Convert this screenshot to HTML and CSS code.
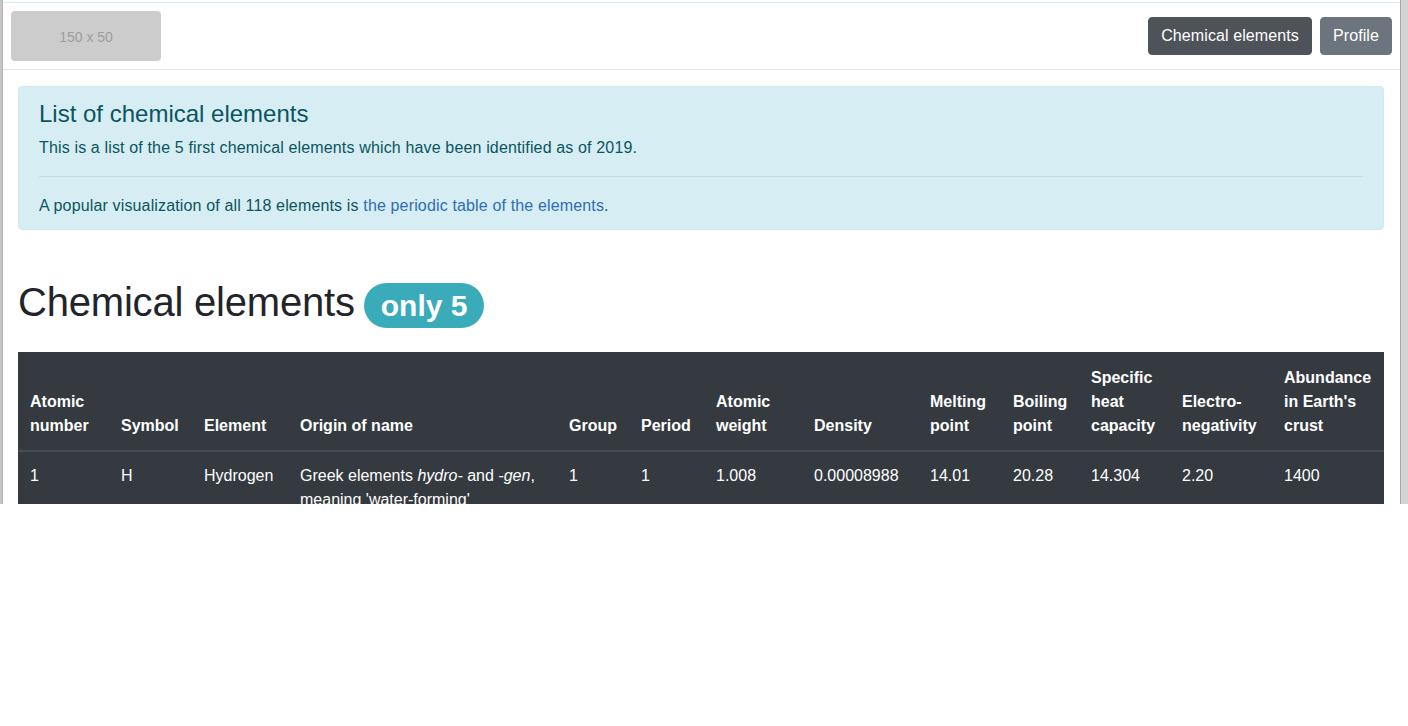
FILE: index.html
```html
<!DOCTYPE html>
<html>
<head>
<meta charset="utf-8">
<link rel="stylesheet" href="styles.css">
</head>
<body>
<div class="frame">
  <div class="edge-left"></div>
  <div class="viewport">
    <nav class="navbar">
      <div class="logo">150 x 50</div>
      <div class="nav-buttons">
        <button class="btn btn-active">Chemical elements</button>
        <button class="btn btn-secondary">Profile</button>
      </div>
    </nav>
    <main class="container">
      <div class="alert">
        <h4 class="alert-heading">List of chemical elements</h4>
        <p>This is a list of the 5 first chemical elements which have been identified as of 2019.</p>
        <hr>
        <p class="mb-0">A popular visualization of all 118 elements is <a href="#">the periodic table of the elements</a>.</p>
      </div>
      <h1 class="title">Chemical elements<span class="badge">only 5</span></h1>
      <table class="table">
        <colgroup>
          <col class="c1"><col class="c2"><col class="c3"><col class="c4"><col class="c5"><col class="c6"><col class="c7"><col class="c8"><col class="c9"><col class="c10"><col class="c11"><col class="c12"><col class="c13">
        </colgroup>
        <thead>
          <tr>
            <th>Atomic number</th>
            <th>Symbol</th>
            <th>Element</th>
            <th>Origin of name</th>
            <th>Group</th>
            <th>Period</th>
            <th>Atomic weight</th>
            <th>Density</th>
            <th>Melting point</th>
            <th>Boiling point</th>
            <th>Specific heat capacity</th>
            <th>Electro-negativity</th>
            <th>Abundance in Earth's crust</th>
          </tr>
        </thead>
        <tbody>
          <tr>
            <td>1</td>
            <td>H</td>
            <td>Hydrogen</td>
            <td>Greek elements <em>hydro-</em> and <em>-gen</em>, meaning 'water-forming'</td>
            <td>1</td>
            <td>1</td>
            <td>1.008</td>
            <td>0.00008988</td>
            <td>14.01</td>
            <td>20.28</td>
            <td>14.304</td>
            <td>2.20</td>
            <td>1400</td>
          </tr>
          <tr>
            <td>2</td>
            <td>He</td>
            <td>Helium</td>
            <td>Greek <em>hḗlios</em>, 'sun'</td>
            <td>18</td>
            <td>1</td>
            <td>4.0026</td>
            <td>0.0001785</td>
            <td>0.956</td>
            <td>4.22</td>
            <td>5.193</td>
            <td>–</td>
            <td>0.008</td>
          </tr>
        </tbody>
      </table>
    </main>
  </div>
  <div class="scrollbar"></div>
</div>
</body>
</html>
```

FILE: styles.css
```css
* { box-sizing: border-box; }

html, body {
  margin: 0;
  padding: 0;
  background: #fff;
}

body {
  font-family: "Liberation Sans", Arial, Helvetica, sans-serif;
  font-size: 16px;
  line-height: 1.5;
  color: #212529;
}

.frame {
  display: flex;
  width: 1408px;
  height: 504px;
  overflow: hidden;
}

.edge-left {
  width: 3px;
  flex: none;
  background: #c6c6c6;
  border-right: 1px solid #b4b4b4;
}

.viewport {
  flex: 1;
  min-width: 0;
  overflow: hidden;
  border-top: 2px solid #fff;
}

.scrollbar {
  width: 8px;
  flex: none;
  background: #d3d3d3;
  border-left: 1px solid #a9a9a9;
}

.navbar {
  display: flex;
  justify-content: space-between;
  align-items: center;
  padding: 8px;
  border-top: 1px solid #d8ecf1;
  border-bottom: 1px solid #dde9ee;
}

.logo {
  width: 150px;
  height: 50px;
  background: #cccccc;
  border-radius: 4px;
  color: #9d9d9d;
  font-size: 14px;
  display: flex;
  align-items: center;
  justify-content: center;
  padding-top: 2px;
}

.nav-buttons {
  display: flex;
  gap: 8px;
}

.btn {
  font-family: inherit;
  font-size: 16px;
  line-height: 24px;
  letter-spacing: 0.1px;
  padding: 6px 12px;
  border: 1px solid transparent;
  border-radius: 4px;
  color: #fff;
  cursor: pointer;
}

.btn-active {
  background: #4e5259;
  border-color: #4e5259;
}

.btn-secondary {
  background: #6c757d;
  border-color: #6c757d;
}

.container {
  padding: 0 16px 0 15px;
}

.alert {
  margin-top: 16px;
  padding: 12px 20px 11px 20px;
  background: #d6eef3;
  border: 1px solid #cfe9ef;
  border-radius: 4px;
  color: #0c5460;
}

.alert-heading {
  margin: 0 0 7px 0;
  padding-top: 1px;
  font-size: 24px;
  font-weight: 500;
  line-height: 1.2;
}

.alert p {
  margin: 0 0 16px 0;
  letter-spacing: 0.15px;
}

.alert p.mb-0 {
  margin-bottom: 0;
}

.alert hr {
  margin: 14px 0 17px 0;
  border: 0;
  border-top: 1px solid #bcdfe6;
}

.alert a {
  color: #2f6db3;
  text-decoration: none;
}

.title {
  margin: 48px 0 24px 0;
  font-size: 40px;
  font-weight: 500;
  line-height: 1.2;
  letter-spacing: -0.2px;
  color: #212529;
}

.badge {
  display: inline-block;
  margin-left: 9px;
  font-size: 30px;
  font-weight: 700;
  line-height: 1;
  letter-spacing: 0;
  padding: 7.5px 17px;
  border-radius: 160px;
  background: #3aabb8;
  color: #fff;
  vertical-align: baseline;
}

.table {
  width: 1366px;
  table-layout: fixed;
  border-collapse: collapse;
  background: #343a40;
  color: #fff;
}

.c1 { width: 91px; }
.c2 { width: 83px; }
.c3 { width: 96px; }
.c4 { width: 269px; }
.c5 { width: 72px; }
.c6 { width: 75px; }
.c7 { width: 98px; }
.c8 { width: 116px; }
.c9 { width: 83px; }
.c10 { width: 78px; }
.c11 { width: 91px; }
.c12 { width: 102px; }
.c13 { width: 112px; }

.table th,
.table td {
  padding: 12px;
  text-align: left;
  vertical-align: top;
  line-height: 24px;
}

.table thead th {
  padding-top: 14px;
  vertical-align: bottom;
  font-weight: 700;
  border-bottom: 2px solid #454d55;
}

.table tbody td {
  border-top: 1px solid #454d55;
}
```
